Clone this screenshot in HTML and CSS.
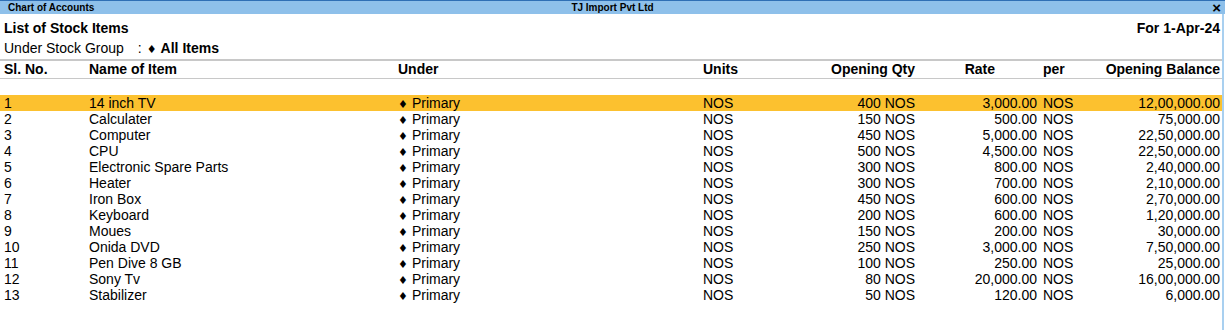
FILE: index.html
```html
<!DOCTYPE html>
<html lang="en">
<head>
    <meta charset="UTF-8">
    <title>List of Stock Items</title>
    <link rel="stylesheet" href="styles.css">
</head>
<body>
    <div class="titlebar">
        <span class="tb-left">Chart of Accounts</span>
        <span class="tb-center">TJ Import Pvt Ltd</span>
        <span class="tb-close">&times;</span>
    </div>

    <div class="report">
        <div class="report-head">
            <div class="report-title">List of Stock Items</div>
            <div class="report-date">For 1-Apr-24</div>
        </div>
        <div class="report-sub">
            <span class="sub-label">Under Stock Group</span>
            <span class="sub-colon">:</span>
            <span class="dia">&#9830;</span><b>All Items</b>
        </div>

        <div class="grid col-head">
            <div>Sl. No.</div>
            <div>Name of Item</div>
            <div>Under</div>
            <div>Units</div>
            <div class="num">Opening Qty</div>
            <div class="num rate-head">Rate</div>
            <div class="per">per</div>
            <div class="num">Opening Balance</div>
        </div>

        <div class="spacer"></div>

        <div id="rows"></div>
    </div>

    <script>
        const items = [
            ['14 inch TV', 400, '3,000.00', '12,00,000.00'],
            ['Calculater', 150, '500.00', '75,000.00'],
            ['Computer', 450, '5,000.00', '22,50,000.00'],
            ['CPU', 500, '4,500.00', '22,50,000.00'],
            ['Electronic Spare Parts', 300, '800.00', '2,40,000.00'],
            ['Heater', 300, '700.00', '2,10,000.00'],
            ['Iron Box', 450, '600.00', '2,70,000.00'],
            ['Keyboard', 200, '600.00', '1,20,000.00'],
            ['Moues', 150, '200.00', '30,000.00'],
            ['Onida DVD', 250, '3,000.00', '7,50,000.00'],
            ['Pen Dive 8 GB', 100, '250.00', '25,000.00'],
            ['Sony Tv', 80, '20,000.00', '16,00,000.00'],
            ['Stabilizer', 50, '120.00', '6,000.00']
        ];

        const rows = document.getElementById('rows');
        items.forEach((item, i) => {
            const row = document.createElement('div');
            row.className = 'grid row' + (i === 0 ? ' active' : '');
            row.innerHTML = `
                <div>${i + 1}</div>
                <div>${item[0]}</div>
                <div><span class="dia">&#9830;</span>Primary</div>
                <div>NOS</div>
                <div class="num">${item[1]} NOS</div>
                <div class="num">${item[2]}</div>
                <div class="per">NOS</div>
                <div class="num">${item[3]}</div>
            `;
            rows.appendChild(row);
        });
    </script>
</body>
</html>
```

FILE: styles.css
```css
body {
    margin: 0;
    font-family: "Liberation Sans", Arial, sans-serif;
    font-size: 14px;
    color: #000;
    background: #fff;
    width: 1225px;
    height: 330px;
    overflow: hidden;
}
.titlebar {
    height: 13px;
    border-top: 1px solid #2f6fb5;
    background-color: #8ec0ea;
    display: flex;
    align-items: center;
    font-size: 10px;
    font-weight: bold;
    line-height: 13px;
    position: relative;
}
.tb-left {
    padding-left: 8px;
}
.tb-center {
    position: absolute;
    left: 0;
    right: 0;
    text-align: center;
}
.tb-close {
    margin-left: auto;
    padding-right: 4px;
    font-size: 15px;
    line-height: 13px;
    position: relative;
}
.report {
    width: 1222px;
    border-right: 2px solid #a9d0f0;
    height: 316px;
}
.report-head {
    display: flex;
    justify-content: space-between;
    padding: 6px 2px 0 4px;
    line-height: 16px;
    height: 16px;
    font-weight: bold;
}
.report-sub {
    padding-left: 4px;
    margin-top: 4px;
    line-height: 16px;
    height: 16px;
    display: flex;
    align-items: baseline;
}
.sub-colon {
    margin-left: 14px;
    margin-right: 5px;
}
.dia {
    font-family: "DejaVu Sans", sans-serif;
    font-size: 11px;
    line-height: 0;
    margin-right: 4px;
}
.grid {
    display: grid;
    grid-template-columns: 85px 309px 305px 80px 132px 122px 46px 137px;
    grid-auto-rows: 16px;
    padding-left: 4px;
    line-height: 16px;
    white-space: nowrap;
}
.num {
    text-align: right;
}
.per {
    padding-left: 6px;
}
.col-head {
    margin-top: 3px;
    border-top: 2px solid #c8c8c8;
    border-bottom: 1px solid #c8c8c8;
    font-weight: bold;
    grid-auto-rows: 17px;
    line-height: 16px;
}
.rate-head {
    padding-right: 42px;
}
.spacer {
    height: 16px;
}
.row.active {
    background-color: #fcc12f;
}
```
